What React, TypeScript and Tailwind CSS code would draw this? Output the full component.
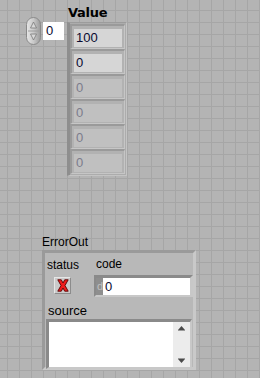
import React from 'react'

const values = [
  { v: '100', active: true },
  { v: '0', active: true },
  { v: '0', active: false },
  { v: '0', active: false },
  { v: '0', active: false },
  { v: '0', active: false },
]

const font = 'font-["Liberation_Sans",Arial,sans-serif]'

function Spinner() {
  return (
    <svg width="15" height="28" viewBox="0 0 15 28">
      <defs>
        <linearGradient id="sp" x1="0" y1="0" x2="1" y2="0">
          <stop offset="0" stopColor="#e6e6e6" />
          <stop offset="0.5" stopColor="#c9c9c9" />
          <stop offset="1" stopColor="#9a9a9a" />
        </linearGradient>
      </defs>
      <rect x="0.5" y="0.5" width="14" height="27" rx="7" fill="url(#sp)" stroke="#8a8a8a" />
      <line x1="2" y1="14" x2="13" y2="14" stroke="#9c9c9c" />
      <path d="M7.5 5 L10.5 11 L4.5 11 Z" fill="#d8d8d8" stroke="#7a7a7a" strokeWidth="0.8" />
      <path d="M7.5 23 L10.5 17 L4.5 17 Z" fill="#d8d8d8" stroke="#7a7a7a" strokeWidth="0.8" />
    </svg>
  )
}

function RedX() {
  return (
    <svg width="12" height="13" viewBox="0 0 12 13">
      <path
        d="M0.8 0.8 L4.3 0.8 L6 4 L7.7 0.8 L11.2 0.8 L8 6.5 L11.2 12.2 L7.7 12.2 L6 9 L4.3 12.2 L0.8 12.2 L4 6.5 Z"
        fill="#ee1c1c"
        stroke="#5a0000"
        strokeWidth="0.9"
      />
    </svg>
  )
}

export default function App() {
  return (
    <div
      className={`relative w-[260px] h-[378px] overflow-hidden bg-[#b4b4b4] bg-[linear-gradient(to_right,#a6a6a6_1px,transparent_1px),linear-gradient(to_bottom,#a6a6a6_1px,transparent_1px)] bg-size-[12px_12px] bg-position-[7px_10px] ${font} text-[12px] text-black`}
    >
      {/* index control */}
      <div className="absolute left-[26px] top-[17px] flex items-center gap-[2px]">
        <Spinner />
        <div className="w-[21px] h-[18px] bg-white pl-[3px] leading-[18px] text-[13px] text-[#0a0a30]">0</div>
      </div>

      {/* array label */}
      <div className="absolute left-[68px] top-[5px] font-['DejaVu_Sans',sans-serif] font-bold text-[13px] leading-[16px] tracking-[-0.3px]">
        Value
      </div>

      {/* array */}
      <div className="absolute left-[67px] top-[22px] w-[60px] h-[154px] bg-[#acacac] border-l-[3px] border-[#8e8e8e] border-t border-t-[#9c9c9c] border-r border-r-[#c4c4c4] border-b border-b-[#c4c4c4] pt-[1px]">
        {values.map((item, i) => (
          <div
            key={i}
            className="w-[55px] h-[25px] bg-[#b2b2b2] border-t-2 border-l-2 border-[#9a9a9a] border-b border-b-[#c6c6c6] border-r border-r-[#c6c6c6] pl-[2px] pt-[3px]"
          >
            <div
              className={`w-[48px] h-[18px] pl-[2px] leading-[18px] text-[13px] ${item.active ? 'bg-[#d6d6d6] text-[#0a0a30]' : 'bg-[#c0c0c0] text-[#7c7c8c]'}`}
            >
              {item.v}
            </div>
          </div>
        ))}
      </div>

      {/* error cluster label */}
      <div className="absolute left-[42px] top-[235px] text-[12px] leading-[14px]">ErrorOut</div>

      {/* error cluster */}
      <div className="absolute left-[42px] top-[250px] w-[154px] h-[120px] bg-[#b8b8b8] border-l-[3px] border-t-[3px] border-[#9a9a9a] border-r-[3px] border-r-[#c9c9c9] border-b-[3px] border-b-[#c9c9c9] pl-[1px] pt-[5px]">
        <div className="flex">
          <div className="flex flex-col w-[48px]">
            <div className="leading-[14px] pl-[1px]">status</div>
            <div className="mt-[5px] ml-[8px] w-[17px] h-[17px] bg-[#cacaca] border-t border-l border-[#e6e6e6] border-b border-r border-b-[#8c8c8c] border-r-[#8c8c8c] flex items-center justify-center">
              <RedX />
            </div>
          </div>
          <div className="flex flex-col">
            <div className="leading-[14px] pl-[2px] -mt-[1px]">code</div>
            <div className="mt-[4px] w-[99px] h-[22px] bg-[#a6a6a6] border-t-[3px] border-l-[2px] border-[#8a8a8a] border-b-[2px] border-r-[3px] border-b-[#c8c8c8] border-r-[#c8c8c8] flex">
              <div className="w-[7px] h-[17px] bg-[#8e8e8e] text-[#c0c0c0] text-[11px] leading-[17px] pl-[1px]">d</div>
              <div className="flex-1 h-[17px] bg-white leading-[17px] pl-[2px] text-[13px] text-[#0a0a30]">0</div>
            </div>
          </div>
        </div>
        <div className="mt-[7px] pl-[2px] leading-[14px] text-[13px]">source</div>
        <div className="mt-[1px] w-[146px] h-[50px] bg-[#a6a6a6] border-t-[3px] border-l-[3px] border-[#8a8a8a] border-b-[2px] border-r-[2px] border-b-[#c8c8c8] border-r-[#c8c8c8] flex">
          <div className="flex-1 bg-white" />
          <div className="w-[17px] bg-[#ececec] flex flex-col items-center justify-between py-[4px]">
            <svg width="7" height="5" viewBox="0 0 7 5">
              <path d="M3.5 0 L7 4 L0 4 Z" fill="#4a4a4a" />
              <line x1="0" y1="4.5" x2="7" y2="4.5" stroke="#9a9a9a" />
            </svg>
            <svg width="7" height="5" viewBox="0 0 7 5">
              <line x1="0" y1="0.5" x2="7" y2="0.5" stroke="#9a9a9a" />
              <path d="M0 1 L7 1 L3.5 5 Z" fill="#4a4a4a" />
            </svg>
          </div>
        </div>
      </div>
    </div>
  )
}
